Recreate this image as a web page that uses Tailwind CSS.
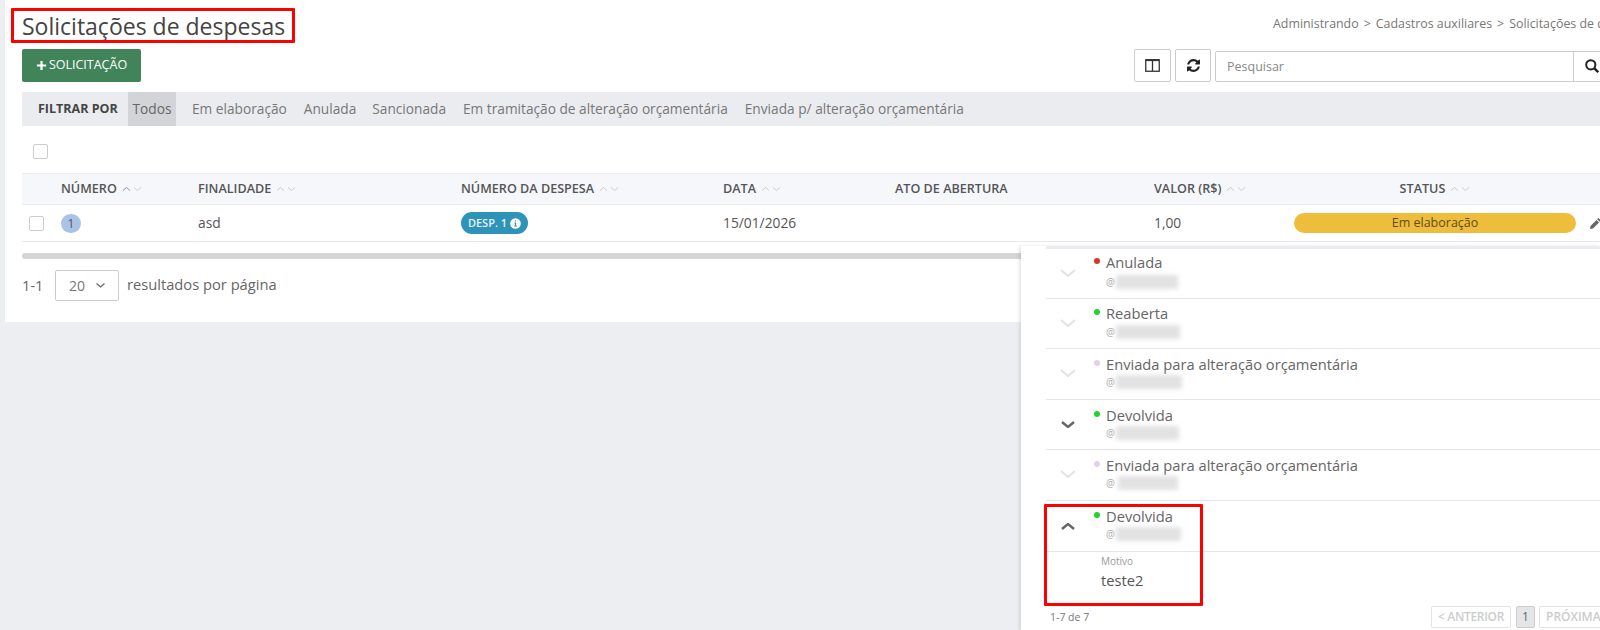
<!DOCTYPE html>
<html lang="pt-BR">
<head>
    <meta charset="UTF-8">
    <title>Solicitações de despesas</title>
    <script src="https://cdn.jsdelivr.net/npm/@tailwindcss/browser@4"></script>
</head>
<body class="relative h-[630px] w-[1600px] overflow-hidden bg-[#eceef2] font-['Open_Sans',sans-serif] text-[#555]">
    <!-- card -->
    <main class="ml-[5px] h-[322px] w-[1680px] bg-white pl-[17px]">
        <div class="flex h-[49px] items-start">
            <h1 class="mt-[9px] w-[1251px] shrink-0 text-[23px] leading-[34px] font-normal text-[#444]">Solicitações de despesas</h1>
            <div class="mt-[15px] flex gap-[5px] text-[12.4px] leading-[18px] whitespace-nowrap text-[#777]">
                <span>Administrando</span><span>&gt;</span><span>Cadastros auxiliares</span><span>&gt;</span><span>Solicitações de despesas</span>
            </div>
        </div>

        <div class="flex h-[33px] items-start">
            <button class="flex h-[33px] w-[119px] items-center justify-center gap-[2px] rounded-[2px] bg-[#41845a] text-[12.5px] text-white">
                <svg class="h-[11px] w-[11px]" viewBox="0 0 12 12"><path d="M6 1v10M1 6h10" stroke="#fff" stroke-width="2.4"/></svg>
                SOLICITAÇÃO
            </button>
            <div class="ml-[993px] flex gap-[4px]">
                <button class="flex h-[33px] w-[37px] items-center justify-center rounded-[2px] border border-[#ccc] bg-white">
                    <svg class="h-[13px] w-[15px]" viewBox="0 0 15 13" fill="none" stroke="#333" stroke-width="1.3"><rect x=".75" y=".75" width="13.5" height="11.5"/><path d="M7.500 1v11"/><path d="M1 1.200h13" stroke-width="1.800"/></svg>
                </button>
                <button class="flex h-[33px] w-[36px] items-center justify-center rounded-[2px] border border-[#ccc] bg-white">
                    <svg class="h-[13px] w-[13px]" viewBox="0 0 1536 1536" fill="#222"><path d="M1511 928q0 5-1 7-64 268-268 434.5t-478 166.5q-146 0-282.500-55t-243.500-157l-129 129q-19 19-45 19t-45-19-19-45v-448q0-26 19-45t45-19h448q26 0 45 19t19 45-19 45l-137 137q71 66 161 102t187 36q134 0 250-65t186-179q11-17 53-117 8-23 30-23h192q13 0 22.500 9.500t9.500 22.500zm25-800v448q0 26-19 45t-45 19h-448q-26 0-45-19t-19-45 19-45l138-138q-148-137-349-137-134 0-250 65t-186 179q-11 17-53 117-8 23-30 23h-199q-13 0-22.500-9.500t-9.500-22.500v-7q65-268 270-434.500t480-166.500q146 0 284 55.500t245 156.500l130-129q19-19 45-19t45 19 19 45z"/></svg>
                </button>
                <div class="mt-[2px] flex h-[31px] w-[400px] rounded-[2px] border border-[#ccc] bg-white">
                    <span class="w-[358px] border-r border-[#ccc] pl-[11px] text-[12.5px] leading-[29px] text-[#888]">Pesquisar</span>
                    <svg class="mt-[7px] ml-[11px] h-[14px] w-[14px]" viewBox="0 0 14 14" fill="none" stroke="#222" stroke-width="2"><circle cx="5.800" cy="5.800" r="4.600"/><path d="M9.200 9.200l4 4" stroke-width="2.400"/></svg>
                </div>
            </div>
        </div>

        <nav class="mt-[10px] flex h-[34px] items-stretch bg-[#ebecf0] text-[13.7px] leading-[34px] whitespace-nowrap text-[#777]">
            <span class="ml-[16px] w-[90px] text-[12.5px] font-bold text-[#444]">FILTRAR POR</span>
            <span class="w-[48px] bg-[#d3d4d8] text-center text-[#666]">Todos</span>
            <span class="ml-[16px]">Em elaboração</span>
            <span class="ml-[17px]">Anulada</span>
            <span class="ml-[16px]">Sancionada</span>
            <span class="ml-[17px]">Em tramitação de alteração orçamentária</span>
            <span class="ml-[17px]">Enviada p/ alteração orçamentária</span>
        </nav>

        <div class="flex h-[47px] items-start pt-[18px] pl-[11px]">
            <span class="h-[15px] w-[15px] rounded-[2px] border border-[#ccc] bg-white"></span>
        </div>

        <!-- table -->
        <div class="flex h-[32px] items-center border-y border-[#ececf0] bg-[#f6f7fb] text-[12.6px] font-semibold text-[#555]">
            <span class="flex w-[176px] items-center gap-[5px] pl-[39px]">NÚMERO
                <svg class="h-[6px] w-[20px]" viewBox="0 0 20 6" fill="none" stroke-width="1"><path d="M1 4.500l3.500-3 3.500 3" stroke="#7f93c4"/><path d="M12 1.500l3.500 3 3.500-3" stroke="#ccc"/></svg>
            </span>
            <span class="flex w-[263px] items-center gap-[5px]">FINALIDADE
                <svg class="h-[6px] w-[20px]" viewBox="0 0 20 6" fill="none" stroke="#ccc" stroke-width="1"><path d="M1 4.500l3.500-3 3.500 3"/><path d="M12 1.500l3.500 3 3.500-3"/></svg>
            </span>
            <span class="flex w-[262px] items-center gap-[5px]">NÚMERO DA DESPESA
                <svg class="h-[6px] w-[20px]" viewBox="0 0 20 6" fill="none" stroke="#ccc" stroke-width="1"><path d="M1 4.500l3.500-3 3.500 3"/><path d="M12 1.500l3.500 3 3.500-3"/></svg>
            </span>
            <span class="flex w-[172px] items-center gap-[5px]">DATA
                <svg class="h-[6px] w-[20px]" viewBox="0 0 20 6" fill="none" stroke="#ccc" stroke-width="1"><path d="M1 4.500l3.500-3 3.500 3"/><path d="M12 1.500l3.500 3 3.500-3"/></svg>
            </span>
            <span class="w-[259px]">ATO DE ABERTURA</span>
            <span class="flex w-[140px] items-center gap-[5px]">VALOR (R$)
                <svg class="h-[6px] w-[20px]" viewBox="0 0 20 6" fill="none" stroke="#ccc" stroke-width="1"><path d="M1 4.500l3.500-3 3.500 3"/><path d="M12 1.500l3.500 3 3.500-3"/></svg>
            </span>
            <span class="flex w-[282px] items-center justify-center gap-[5px]">STATUS
                <svg class="h-[6px] w-[20px]" viewBox="0 0 20 6" fill="none" stroke="#ccc" stroke-width="1"><path d="M1 4.500l3.500-3 3.500 3"/><path d="M12 1.500l3.500 3 3.500-3"/></svg>
            </span>
        </div>
        <div class="flex h-[37px] items-center border-b border-[#e8e8ec] text-[13.8px] text-[#555]">
            <span class="w-[39px] pl-[7px]"><span class="block h-[15px] w-[15px] rounded-[2px] border border-[#ccc] bg-white"></span></span>
            <span class="w-[137px]"><span class="block h-[19px] w-[20px] rounded-full bg-[#a9c3e8] text-center text-[12px] leading-[19px]">1</span></span>
            <span class="w-[263px]">asd</span>
            <span class="w-[262px]">
                <span class="flex h-[22px] w-[67px] items-center justify-center gap-[3px] rounded-full bg-[#2e93b8] text-[11px] font-semibold text-[#e6f3f8]">DESP. 1
                    <svg class="h-[11px] w-[11px]" viewBox="0 0 12 12"><circle cx="6" cy="6" r="5.800" fill="#fff"/><path d="M4.800 5h1.900v3.200h.8v1H4.600v-1h.8V6h-.6zM5.300 2.400h1.400v1.500H5.300z" fill="#2e93b8"/></svg>
                </span>
            </span>
            <span class="w-[172px]">15/01/2026</span>
            <span class="w-[259px]"></span>
            <span class="w-[140px]">1,00</span>
            <span class="block h-[20px] w-[282px] rounded-full bg-[#eebd3c] text-center text-[12.5px] leading-[20px] text-[#5f4d1a]">Em elaboração</span>
            <svg class="ml-[13px] h-[13px] w-[13px]" viewBox="0 0 13 13" fill="#666"><path d="M9.500 1l2.500 2.500-1.300 1.300-2.500-2.500zM7.500 3l2.500 2.500L4 11.500 1 12l.5-3z"/></svg>
        </div>
        <div class="mt-[11px] h-[6px] w-[1580px] rounded-full bg-[#d4d4d4]"></div>
        <div class="mt-[11px] flex items-center text-[14.7px] text-[#666]">
            <span class="w-[33px]">1-1</span>
            <span class="flex h-[31px] w-[64px] items-center justify-between rounded-[2px] border border-[#ccc] pr-[13px] pl-[13px] text-[14px] text-[#777]">20
                <svg class="h-[5px] w-[9px]" viewBox="0 0 9 5" fill="none" stroke="#666" stroke-width="1.200"><path d="M.5.500l4 3.500 4-3.500"/></svg>
            </span>
            <span class="-mt-[2px] ml-[8px]">resultados por página</span>
        </div>
    </main>

    <!-- history panel, lies over the card -->
    <aside class="absolute top-[246px] right-0 bottom-0 left-[1021px] bg-white pl-[25px] shadow-[-2px_0_3px_rgba(0,0,0,0.1)] text-[14.7px] text-[#666]">
        <div class="h-[3px] bg-[#ececf0]"></div>
        <div class="flex h-[50px] border-b border-[#e6e6ea]">
            <svg class="mt-[20px] ml-[14px] h-[8px] w-[16px]" viewBox="0 0 16 8" fill="none" stroke="#e2e2e2" stroke-width="2"><path d="M1 1l7 6 7-6"/></svg>
            <div class="ml-[30px] pt-[3px]">
                <div class="relative leading-[20px]"><span class="absolute top-[6px] -left-[12px] h-[6px] w-[6px] rounded-full bg-[#d9342b]"></span>Anulada</div>
                <div class="mt-[2px] flex h-[16px] items-center text-[10px] text-[#aaa]">@<span class="ml-[1px] h-[14px] w-[62px] bg-[#e2e2e2] blur-[2px]"></span></div>
            </div>
        </div>
        <div class="flex h-[50px] border-b border-[#e6e6ea]">
            <svg class="mt-[20px] ml-[14px] h-[8px] w-[16px]" viewBox="0 0 16 8" fill="none" stroke="#e2e2e2" stroke-width="2"><path d="M1 1l7 6 7-6"/></svg>
            <div class="ml-[30px] pt-[4px]">
                <div class="relative leading-[20px]"><span class="absolute top-[6px] -left-[12px] h-[6px] w-[6px] rounded-full bg-[#22d32a]"></span>Reaberta</div>
                <div class="mt-[1px] flex h-[16px] items-center text-[10px] text-[#aaa]">@<span class="ml-[1px] h-[14px] w-[64px] bg-[#e2e2e2] blur-[2px]"></span></div>
            </div>
        </div>
        <div class="flex h-[51px] border-b border-[#e6e6ea]">
            <svg class="mt-[20px] ml-[14px] h-[8px] w-[16px]" viewBox="0 0 16 8" fill="none" stroke="#e2e2e2" stroke-width="2"><path d="M1 1l7 6 7-6"/></svg>
            <div class="ml-[30px] pt-[5px]">
                <div class="relative leading-[20px]"><span class="absolute top-[6px] -left-[12px] h-[6px] w-[6px] rounded-full bg-[#e3cfe8]"></span>Enviada para alteração orçamentária</div>
                <div class="flex h-[16px] items-center text-[10px] text-[#aaa]">@<span class="ml-[1px] h-[14px] w-[66px] bg-[#e2e2e2] blur-[2px]"></span></div>
            </div>
        </div>
        <div class="flex h-[50px] border-b border-[#e6e6ea]">
            <svg class="mt-[21px] ml-[15px] h-[7px] w-[14px]" viewBox="0 0 14 7" fill="none" stroke="#666" stroke-width="2.400"><path d="M1 1l6 5 6-5"/></svg>
            <div class="ml-[31px] pt-[5px]">
                <div class="relative leading-[20px]"><span class="absolute top-[6px] -left-[12px] h-[6px] w-[6px] rounded-full bg-[#22d32a]"></span>Devolvida</div>
                <div class="flex h-[16px] items-center text-[10px] text-[#aaa]">@<span class="ml-[1px] h-[14px] w-[63px] bg-[#e2e2e2] blur-[2px]"></span></div>
            </div>
        </div>
        <div class="flex h-[51px] border-b border-[#e6e6ea]">
            <svg class="mt-[20px] ml-[14px] h-[8px] w-[16px]" viewBox="0 0 16 8" fill="none" stroke="#e2e2e2" stroke-width="2"><path d="M1 1l7 6 7-6"/></svg>
            <div class="ml-[30px] pt-[5px]">
                <div class="relative leading-[20px]"><span class="absolute top-[6px] -left-[12px] h-[6px] w-[6px] rounded-full bg-[#e3cfe8]"></span>Enviada para alteração orçamentária</div>
                <div class="flex h-[16px] items-center text-[10px] text-[#aaa]">@<span class="ml-[3px] h-[14px] w-[60px] bg-[#e2e2e2] blur-[2px]"></span></div>
            </div>
        </div>
        <div class="flex h-[51px] border-b border-[#e6e6ea]">
            <svg class="mt-[22px] ml-[15px] h-[7px] w-[14px]" viewBox="0 0 14 7" fill="none" stroke="#666" stroke-width="2.400"><path d="M1 6l6-5 6 5"/></svg>
            <div class="ml-[31px] pt-[5px]">
                <div class="relative leading-[20px]"><span class="absolute top-[6px] -left-[12px] h-[6px] w-[6px] rounded-full bg-[#22d32a]"></span>Devolvida</div>
                <div class="flex h-[16px] items-center text-[10px] text-[#aaa]">@<span class="ml-[1px] h-[14px] w-[65px] bg-[#e2e2e2] blur-[2px]"></span></div>
            </div>
        </div>
        <div class="h-[54px] pt-[2px] pl-[55px]">
            <div class="text-[10px] leading-[14px] text-[#999]">Motivo</div>
            <div class="text-[14.7px] leading-[24px] text-[#555]">teste2</div>
        </div>
        <div class="flex items-start text-[12px] whitespace-nowrap">
            <span class="mt-[4px] w-[385px] shrink-0 pl-[4px] text-[10.500px] leading-[14px] text-[#777]">1-7 de 7</span>
            <span class="flex h-[22px] w-[80px] shrink-0 items-center justify-center rounded-[2px] border border-[#e4e4e4] font-semibold tracking-[-0.3px] text-[#ccc]">&lt; ANTERIOR</span>
            <span class="ml-[5px] h-[22px] w-[19px] shrink-0 rounded-[2px] border border-[#ccc] bg-[#e3e5e9] text-center leading-[20px] text-[#666]">1</span>
            <span class="ml-[4px] h-[22px] w-[80px] shrink-0 rounded-[2px] border border-[#e4e4e4] pl-[6px] leading-[20px] font-semibold text-[#ccc]">PRÓXIMA</span>
        </div>
    </aside>

    <!-- red annotations -->
    <div class="absolute top-[8px] left-[11px] h-[35px] w-[284px] rounded-[1px] border-[3px] border-[#f00]"></div>
    <div class="absolute top-[504px] left-[1044px] h-[102px] w-[159px] rounded-[1px] border-[3px] border-[#f00]"></div>
</body>
</html>
